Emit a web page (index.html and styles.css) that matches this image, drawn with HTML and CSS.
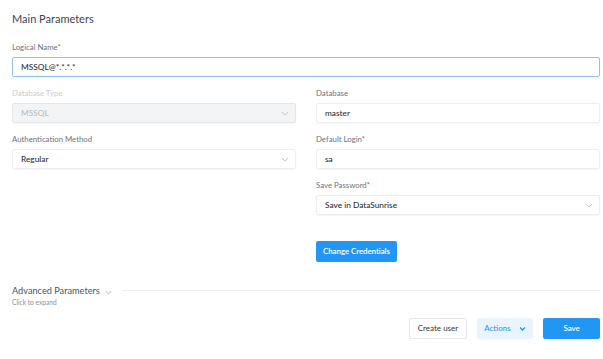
FILE: index.html
```html
<!DOCTYPE html>
<html lang="en">
<head>
    <meta charset="UTF-8">
    <meta name="viewport" content="width=device-width, initial-scale=1.0">
    <title>Main Parameters</title>
    <link rel="stylesheet" href="styles.css">
</head>
<body>
    <div class="page">
        <h2 class="section-title">Main Parameters</h2>

        <div class="field">
            <label class="label">Logical Name<span class="req">*</span></label>
            <div class="input active">MSSQL@*.*.*.*</div>
        </div>

        <div class="columns">
            <div class="column">
                <div class="field">
                    <label class="label disabled">Database Type</label>
                    <div class="input select disabled">
                        <span>MSSQL</span>
                        <svg class="chevron" viewBox="0 0 10 6" width="8" height="5"><path d="M1 1l4 4 4-4" fill="none" stroke="currentColor" stroke-width="1"/></svg>
                    </div>
                </div>
                <div class="field">
                    <label class="label">Authentication Method</label>
                    <div class="input select">
                        <span>Regular</span>
                        <svg class="chevron" viewBox="0 0 10 6" width="8" height="5"><path d="M1 1l4 4 4-4" fill="none" stroke="currentColor" stroke-width="1"/></svg>
                    </div>
                </div>
            </div>
            <div class="column">
                <div class="field">
                    <label class="label">Database</label>
                    <div class="input">master</div>
                </div>
                <div class="field">
                    <label class="label">Default Login<span class="req">*</span></label>
                    <div class="input">sa</div>
                </div>
                <div class="field">
                    <label class="label">Save Password<span class="req">*</span></label>
                    <div class="input select">
                        <span>Save in DataSunrise</span>
                        <svg class="chevron" viewBox="0 0 10 6" width="8" height="5"><path d="M1 1l4 4 4-4" fill="none" stroke="currentColor" stroke-width="1"/></svg>
                    </div>
                </div>
                <div class="cred-row">
                    <button class="btn primary">Change Credentials</button>
                </div>
            </div>
        </div>

        <div class="advanced">
            <div class="advanced-head">
                <span class="advanced-title">Advanced Parameters</span>
                <svg class="adv-chevron" viewBox="0 0 10 6" width="7" height="5"><path d="M1 1l4 4 4-4" fill="none" stroke="currentColor" stroke-width="1"/></svg>
                <div class="divider"></div>
            </div>
            <div class="hint">Click to expand</div>
        </div>

        <div class="footer">
            <button class="btn outline">Create user</button>
            <button class="btn light">Actions
                <svg viewBox="0 0 10 6" width="7" height="5"><path d="M1.5 1.5l3.5 3.5 3.5-3.5" fill="none" stroke="currentColor" stroke-width="2"/></svg>
            </button>
            <button class="btn primary wide">Save</button>
        </div>
    </div>
</body>
</html>
```
FILE: styles.css
```css
body {
    margin: 0;
    font-family: Lato, "Liberation Sans", sans-serif;
    color: #333;
    background: #fff;
}
.page {
    padding: 11px 3px 0 12px;
}
.section-title {
    margin: 0 0 15px;
    font-size: 11px;
    line-height: 16px;
    font-weight: 400;
    color: #3d4450;
}
.field {
    display: flex;
    flex-direction: column;
    margin-bottom: 11px;
}
.label {
    font-size: 7.8px;
    color: #6b7280;
    margin-bottom: 4px;
    line-height: 11px;
}
.label.disabled {
    color: #c9ccd1;
}
.req {
    color: #e5484d;
}
.input {
    height: 20px;
    box-sizing: border-box;
    border: 1px solid #eceef0;
    border-radius: 2px;
    padding: 0 6px 0 8px;
    display: flex;
    align-items: center;
    font-size: 8.3px;
    font-weight: 500;
    color: #2b2f36;
    box-shadow: 0 1px 2px rgba(0, 0, 0, 0.04);
}
.input.active {
    border-color: #8fc3ea;
}
.input.disabled {
    background: #f3f4f5;
    color: #b8bcc2;
    border-color: #e4e6e9;
}
.select {
    justify-content: space-between;
}
.chevron {
    color: #b5b9bf;
}
.columns {
    display: grid;
    grid-template-columns: 1fr 1fr;
    column-gap: 20px;
    margin-top: 2px;
}
.cred-row {
    padding-top: 12px;
}
.btn {
    font-family: inherit;
    font-size: 8px;
    border-radius: 2px;
    height: 21px;
    padding: 0 6px;
    cursor: pointer;
    border: 1px solid transparent;
    white-space: nowrap;
}
.btn.primary {
    background: #2196f3;
    color: #fff;
    font-weight: 600;
    letter-spacing: -0.1px;
}
.btn.outline {
    background: #fff;
    border-color: #e6e8eb;
    color: #333;
    width: 58px;
    padding: 0;
}
.btn.light {
    background: #eaf4fd;
    color: #2196f3;
    width: 56px;
    padding: 0;
    display: flex;
    align-items: center;
    justify-content: center;
    gap: 8px;
}
.btn.wide {
    width: 57px;
    padding: 0;
}
.advanced {
    margin-top: 23px;
}
.advanced-head {
    display: flex;
    align-items: center;
}
.advanced-title {
    font-size: 9.2px;
    line-height: 12px;
    color: #4b5260;
}
.adv-chevron {
    color: #9aa0a8;
    margin: 3px 10px 0 5px;
}
.divider {
    flex: 1;
    height: 1px;
    background: #eceef0;
}
.hint {
    font-size: 6.6px;
    color: #8a9099;
    margin-top: 1px;
}
.footer {
    display: flex;
    justify-content: flex-end;
    gap: 10px;
    margin-top: 12px;
}
```
